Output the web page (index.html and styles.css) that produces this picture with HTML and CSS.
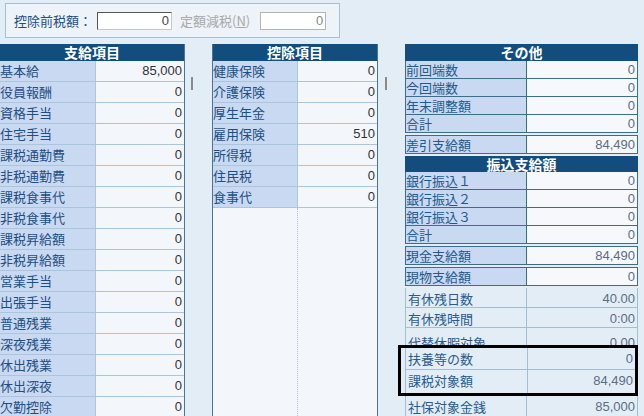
FILE: index.html
```html
<!DOCTYPE html>
<html lang="ja">
<head>
    <meta charset="UTF-8">
    <meta name="viewport" content="width=device-width, initial-scale=1.0">
    <title>給与明細入力</title>
    <link rel="stylesheet" href="styles.css">
</head>
<body>
    <div class="topbar">
        <div class="taxbox">
            <span class="tax-label">控除前税額：</span>
            <div class="field">0</div>
            <span class="dim-label">定額減税(<u>N</u>)</span>
            <div class="field disabled">0</div>
        </div>
    </div>

    <div class="main">
        <div class="panel pay">
            <div class="head">支給項目</div>
            <div class="row"><span class="lbl">基本給</span><span class="val">85,000</span></div>
            <div class="row"><span class="lbl">役員報酬</span><span class="val">0</span></div>
            <div class="row"><span class="lbl">資格手当</span><span class="val">0</span></div>
            <div class="row"><span class="lbl">住宅手当</span><span class="val">0</span></div>
            <div class="row"><span class="lbl">課税通勤費</span><span class="val">0</span></div>
            <div class="row"><span class="lbl">非税通勤費</span><span class="val">0</span></div>
            <div class="row"><span class="lbl">課税食事代</span><span class="val">0</span></div>
            <div class="row"><span class="lbl">非税食事代</span><span class="val">0</span></div>
            <div class="row"><span class="lbl">課税昇給額</span><span class="val">0</span></div>
            <div class="row"><span class="lbl">非税昇給額</span><span class="val">0</span></div>
            <div class="row"><span class="lbl">営業手当</span><span class="val">0</span></div>
            <div class="row"><span class="lbl">出張手当</span><span class="val">0</span></div>
            <div class="row"><span class="lbl">普通残業</span><span class="val">0</span></div>
            <div class="row"><span class="lbl">深夜残業</span><span class="val">0</span></div>
            <div class="row"><span class="lbl">休出残業</span><span class="val">0</span></div>
            <div class="row"><span class="lbl">休出深夜</span><span class="val">0</span></div>
            <div class="row"><span class="lbl">欠勤控除</span><span class="val">0</span></div>
        </div>

        <div class="gutter"><span class="thumb"></span></div>

        <div class="panel ded">
            <div class="head">控除項目</div>
            <div class="row"><span class="lbl">健康保険</span><span class="val">0</span></div>
            <div class="row"><span class="lbl">介護保険</span><span class="val">0</span></div>
            <div class="row"><span class="lbl">厚生年金</span><span class="val">0</span></div>
            <div class="row"><span class="lbl">雇用保険</span><span class="val">510</span></div>
            <div class="row"><span class="lbl">所得税</span><span class="val">0</span></div>
            <div class="row"><span class="lbl">住民税</span><span class="val">0</span></div>
            <div class="row"><span class="lbl">食事代</span><span class="val">0</span></div>
            <div class="filler"><span></span><span></span></div>
        </div>

        <div class="gutter wide"><span class="thumb"></span></div>

        <div class="side">
            <div class="head">その他</div>
            <div class="grid">
                <div class="srow"><span class="lbl">前回端数</span><span class="val">0</span></div>
                <div class="srow"><span class="lbl">今回端数</span><span class="val">0</span></div>
                <div class="srow"><span class="lbl">年末調整額</span><span class="val">0</span></div>
                <div class="srow"><span class="lbl">合計</span><span class="val">0</span></div>
            </div>
            <div class="grid single">
                <div class="srow"><span class="lbl">差引支給額</span><span class="val">84,490</span></div>
            </div>

            <div class="head sub">振込支給額</div>
            <div class="grid">
                <div class="srow"><span class="lbl">銀行振込１</span><span class="val">0</span></div>
                <div class="srow"><span class="lbl">銀行振込２</span><span class="val">0</span></div>
                <div class="srow"><span class="lbl">銀行振込３</span><span class="val">0</span></div>
                <div class="srow"><span class="lbl">合計</span><span class="val">0</span></div>
            </div>
            <div class="grid single">
                <div class="srow"><span class="lbl">現金支給額</span><span class="val">84,490</span></div>
            </div>
            <div class="grid single">
                <div class="srow"><span class="lbl">現物支給額</span><span class="val">0</span></div>
            </div>

            <div class="plain">
                <div class="prow"><span class="lbl">有休残日数</span><span class="val">40.00</span></div>
                <div class="prow"><span class="lbl">有休残時間</span><span class="val">0:00</span></div>
                <div class="prow cut"><span class="lbl">代替休暇対象</span><span class="val">0.00</span></div>
                <div class="mark">
                    <div class="prow tall"><span class="lbl">扶養等の数</span><span class="val">0</span></div>
                    <div class="prow tall"><span class="lbl">課税対象額</span><span class="val">84,490</span></div>
                </div>
                <div class="prow tall"><span class="lbl">社保対象金銭</span><span class="val">85,000</span></div>
            </div>
        </div>
    </div>
</body>
</html>
```

FILE: styles.css
```css
body {
    margin: 0;
    width: 644px;
    height: 416px;
    overflow: hidden;
    background-color: #e3edf6;
    font-family: "Noto Sans CJK JP", "DejaVu Sans", sans-serif;
    font-size: 13px;
    color: #1d4f82;
}
.topbar {
    height: 44px;
    box-sizing: border-box;
    padding: 3px 0 0 5px;
}
.taxbox {
    width: 335px;
    height: 35px;
    box-sizing: border-box;
    border: 1px solid #a6c0d6;
    background-color: #edf3f9;
    display: flex;
    align-items: center;
    padding-left: 8px;
}
.tax-label {
    width: 83px;
}
.field {
    width: 75px;
    height: 18px;
    box-sizing: border-box;
    border: 1px solid #c8c8c8;
    border-top-color: #555;
    border-left-color: #555;
    background-color: #fff;
    text-align: right;
    padding-right: 2px;
    font-family: "Liberation Sans", sans-serif;
    font-size: 13px;
    line-height: 16px;
    color: #444;
}
.field.disabled {
    width: 66px;
    border-color: #b4b4b4;
    color: #888;
}
.dim-label {
    color: #a9a9a9;
    margin: 0 10px 0 8px;
}
.main {
    display: flex;
    height: 372px;
}
.panel {
    display: flex;
    flex-direction: column;
    box-sizing: border-box;
    border-right: 1px solid #4b7394;
    background-color: #f3f7fb;
}
.pay {
    width: 185px;
}
.ded {
    width: 166px;
    border-left: 1px solid #4b7394;
}
.gutter {
    width: 27px;
    padding-left: 6px;
    box-sizing: border-box;
}
.gutter.wide {
    padding-left: 7px;
}
.thumb {
    display: block;
    width: 2px;
    height: 13px;
    margin-top: 33px;
    background-color: #8a8a8a;
}
.head {
    height: 17px;
    flex-shrink: 0;
    background-color: #124d7e;
    color: #fff;
    font-weight: bold;
    font-size: 14px;
    line-height: 17px;
    text-align: center;
}
.row {
    display: grid;
    grid-template-columns: 96px 1fr;
    height: 21px;
    flex-shrink: 0;
    box-sizing: border-box;
    border-bottom: 1px solid #a9c6dc;
    line-height: 20px;
}
.ded .row {
    grid-template-columns: 85px 1fr;
}
.lbl {
    background-color: #c9d9f2;
    border-right: 1px solid #b0c6dc;
    white-space: nowrap;
    overflow: hidden;
}
.val {
    text-align: right;
    padding-right: 2px;
    font-family: "Liberation Sans", sans-serif;
    font-size: 13px;
    color: #333;
}
.filler {
    flex: 1;
    display: grid;
    grid-template-columns: 85px 1fr;
}
.filler span:first-child {
    border-right: 1px dotted #b9b9e4;
}
.side {
    width: 233px;
    display: flex;
    flex-direction: column;
}
.head.sub {
    height: 16px;
    line-height: 16px;
    margin-top: 2px;
}
.grid {
    border: 1px solid #3d6c8c;
    border-top: none;
    background-color: #f6f8fc;
}
.grid.single {
    border-top: 1px solid #3d6c8c;
    margin-top: 2px;
}
.srow {
    display: grid;
    grid-template-columns: 121px 1fr;
    height: 18px;
    box-sizing: border-box;
    border-bottom: 1px solid #3d6c8c;
    line-height: 17px;
}
.srow:last-child {
    border-bottom: none;
    height: 17px;
}
.srow .lbl {
    border-right: 1px solid #3d6c8c;
    color: #23598c;
}
.srow .val,
.prow .val {
    color: #5b6d84;
}
.plain {
    margin-top: 2px;
    border-left: 1px solid #a3bed2;
    border-right: 1px solid #a3bed2;
}
.prow {
    display: grid;
    grid-template-columns: 121px 1fr;
    height: 20px;
    box-sizing: border-box;
    border-bottom: 1px solid #a3bed2;
    line-height: 22px;
    overflow: hidden;
}
.prow .lbl {
    background-color: transparent;
    border-right: 1px solid #a3bed2;
    padding-left: 2px;
    color: #2a5b8c;
}
.prow.cut {
    height: 17px;
    line-height: 30px;
    border-bottom: none;
}
.prow.tall {
    height: 22px;
    line-height: 21px;
}
.mark {
    margin-left: -8px;
    padding-left: 4px;
    border: 3px solid #000;
    border-right-width: 3px;
    margin-right: -1px;
}
.mark .prow {
    grid-template-columns: 122px 1fr;
    border-left: 1px solid #a3bed2;
}
.mark .prow:last-child {
    border-bottom: none;
    height: 23px;
}
```
